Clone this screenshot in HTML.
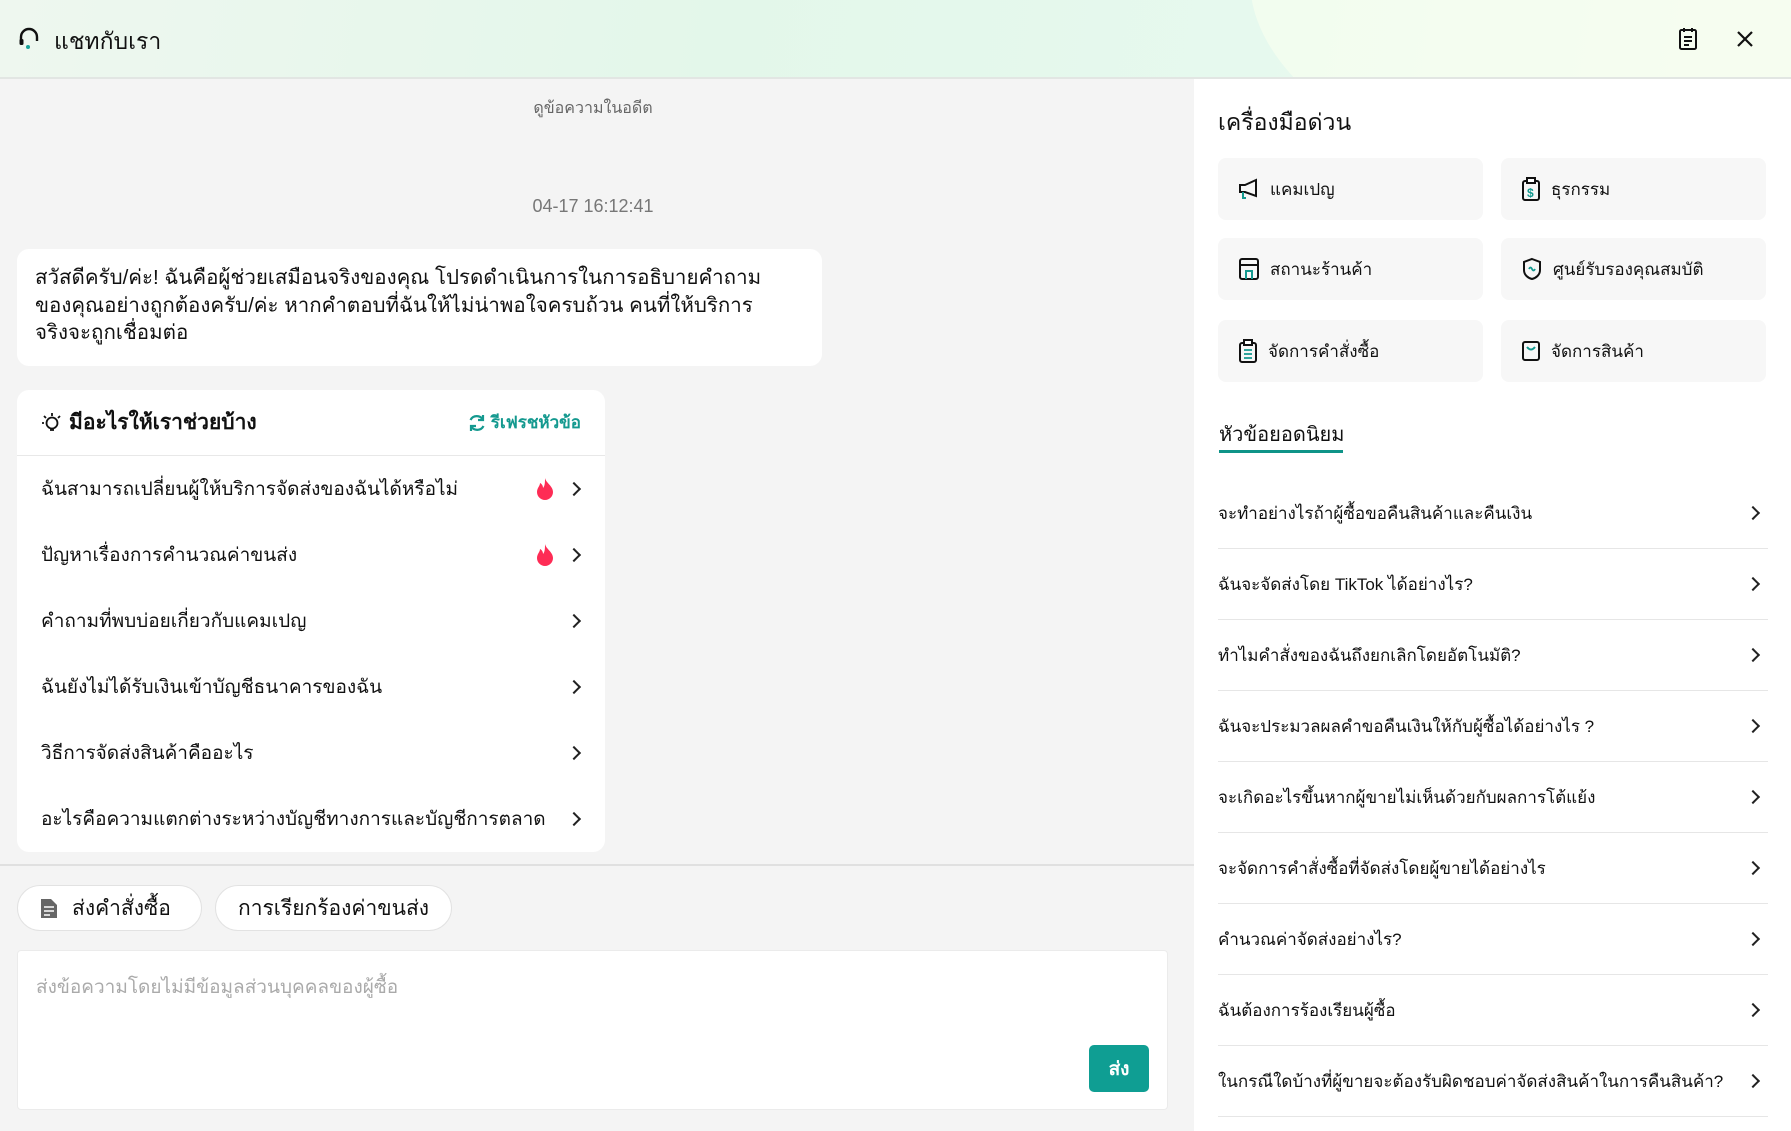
<!DOCTYPE html>
<html><head><meta charset="utf-8"><style>
*{box-sizing:border-box;margin:0;padding:0}
body{width:1791px;height:1131px;overflow:hidden;font-family:"Liberation Sans","DejaVu Sans",sans-serif;color:#111;background:#f4f4f4;position:relative}
.abs{position:absolute}
#hdr{left:0;top:0;width:1791px;height:79px;background:linear-gradient(100deg,#eef7ef 0%,#e3f7ea 40%,#e6f9ee 70%,#f1fbf0 100%);border-bottom:2px solid #e2e6e3;overflow:hidden}
#right{left:1194px;top:79px;width:597px;height:1052px;background:#fff}
.tool{position:absolute;background:#f7f7f7;border-radius:8px;height:62px;width:265px;display:flex;align-items:center;padding-left:20px;font-size:17px;gap:10px}
.row{position:absolute;left:1218px;width:550px;height:71px;border-bottom:1px solid #e6e6e6;display:flex;align-items:center;justify-content:space-between;font-size:17px}
.chev{width:10px;height:10px;border-right:2px solid #222;border-top:2px solid #222;transform:rotate(45deg);margin-right:10px}
.item{position:absolute;left:17px;width:588px;height:66px;display:flex;align-items:center;padding:0 24px 0 24px;font-size:19px;justify-content:space-between}
.fire{display:inline-block;vertical-align:middle;margin-right:14px}
</style></head><body>
<div id="hdr" class="abs">
 <div class="abs" style="left:1250px;top:-300px;width:1400px;height:560px;border-radius:50%;background:rgba(250,255,240,.6)"></div>
 <svg class="abs" style="left:18px;top:27px" width="22" height="24" viewBox="0 0 22 24"><path d="M3 14V10a8 8 0 0 1 16 0v4" fill="none" stroke="#111" stroke-width="2.4"/><rect x="1.5" y="12" width="4" height="6" rx="1.5" fill="#111"/><circle cx="10" cy="20" r="2" fill="#1aa39a"/></svg>
 <div class="abs" style="left:54px;top:24px;font-size:23px">แชทกับเรา</div>
 <svg class="abs" style="left:1677px;top:27px" width="22" height="24" viewBox="0 0 22 24"><rect x="3" y="3" width="16" height="19" rx="1.5" fill="none" stroke="#111" stroke-width="2"/><path d="M7 1v4M15 1v4M7 10h8M7 14h8M7 18h5" stroke="#111" stroke-width="2"/></svg>
 <svg class="abs" style="left:1736px;top:30px" width="18" height="18" viewBox="0 0 18 18"><path d="M2 2L16 16M16 2L2 16" stroke="#111" stroke-width="2.2"/></svg>
</div>

<div class="abs" style="left:0;top:96px;width:1186px;text-align:center;font-size:16px;color:#666">ดูข้อความในอดีต</div>
<div class="abs" style="left:0;top:196px;width:1186px;text-align:center;font-size:18px;color:#777">04-17 16:12:41</div>
<div class="abs" style="left:17px;top:249px;width:805px;height:117px;background:#fff;border-radius:12px;padding:15px 50px 14px 18px;font-size:20.5px;line-height:27.5px">สวัสดีครับ/ค่ะ! ฉันคือผู้ช่วยเสมือนจริงของคุณ โปรดดำเนินการในการอธิบายคำถามของคุณอย่างถูกต้องครับ/ค่ะ หากคำตอบที่ฉันให้ไม่น่าพอใจครบถ้วน คนที่ให้บริการจริงจะถูกเชื่อมต่อ</div>

<div class="abs" style="left:17px;top:390px;width:588px;height:462px;background:#fff;border-radius:12px"></div>
<div class="abs" style="left:17px;top:390px;width:588px;height:66px;border-bottom:1px solid #e8e8e8;display:flex;align-items:center;justify-content:space-between;padding:0 24px">
 <div style="font-size:21px;font-weight:bold;display:flex;align-items:center;gap:8px"><svg width="20" height="22" viewBox="0 0 20 22"><circle cx="11" cy="11" r="5.5" fill="none" stroke="#111" stroke-width="1.8"/><path d="M9 18h4M11 1v3M3 4l2 2M19 4l-2 2M1 11h2" stroke="#111" stroke-width="1.8"/></svg>มีอะไรให้เราช่วยบ้าง</div>
 <div style="font-size:17px;font-weight:bold;color:#14998f;display:flex;align-items:center;gap:4px"><svg width="20" height="20" viewBox="0 0 20 20"><path d="M16 7a7 7 0 0 0-12.5 0M4 13a7 7 0 0 0 12.5 0" fill="none" stroke="#14998f" stroke-width="2.2"/><path d="M16 2v5h-5M4 18v-5h5" fill="none" stroke="#14998f" stroke-width="2.2"/></svg>รีเฟรชหัวข้อ</div>
</div>
<div class="item" style="top:456px"><span>ฉันสามารถเปลี่ยนผู้ให้บริการจัดส่งของฉันได้หรือไม่</span><span><svg class="fire" width="20" height="24" viewBox="0 0 20 24"><path d="M10 1c1 5 8 8 8 14a8 8 0 0 1-16 0c0-4 3-6 3-9 2 1 3 3 3 5 2-2 2-6 2-10z" fill="#fe2c55"/></svg><span class="chev" style="display:inline-block;margin-right:2px"></span></span></div>
<div class="item" style="top:522px"><span>ปัญหาเรื่องการคำนวณค่าขนส่ง</span><span><svg class="fire" width="20" height="24" viewBox="0 0 20 24"><path d="M10 1c1 5 8 8 8 14a8 8 0 0 1-16 0c0-4 3-6 3-9 2 1 3 3 3 5 2-2 2-6 2-10z" fill="#fe2c55"/></svg><span class="chev" style="display:inline-block;margin-right:2px"></span></span></div>
<div class="item" style="top:588px"><span>คำถามที่พบบ่อยเกี่ยวกับแคมเปญ</span><span class="chev" style="margin-right:2px"></span></div>
<div class="item" style="top:654px"><span>ฉันยังไม่ได้รับเงินเข้าบัญชีธนาคารของฉัน</span><span class="chev" style="margin-right:2px"></span></div>
<div class="item" style="top:720px"><span>วิธีการจัดส่งสินค้าคืออะไร</span><span class="chev" style="margin-right:2px"></span></div>
<div class="item" style="top:786px"><span>อะไรคือความแตกต่างระหว่างบัญชีทางการและบัญชีการตลาด</span><span class="chev" style="margin-right:2px"></span></div>

<div class="abs" style="left:0;top:864px;width:1194px;height:2px;background:#e0e0e0"></div>
<div class="abs" style="left:17px;top:885px;width:185px;height:46px;border:1px solid #e2e2e2;border-radius:23px;background:#fff;display:flex;align-items:center;padding-left:22px;gap:14px;font-size:21px"><svg width="18" height="22" viewBox="0 0 18 22"><path d="M1 2h10l6 6v13H1z" fill="#666"/><path d="M4 10h10M4 14h10M4 18h6" stroke="#fff" stroke-width="1.6"/></svg>ส่งคำสั่งซื้อ</div>
<div class="abs" style="left:215px;top:885px;width:237px;height:46px;border:1px solid #e2e2e2;border-radius:23px;background:#fff;display:flex;align-items:center;justify-content:center;font-size:21px">การเรียกร้องค่าขนส่ง</div>
<div class="abs" style="left:17px;top:950px;width:1151px;height:160px;background:#fff;border:1px solid #ebebeb;border-radius:4px"></div>
<div class="abs" style="left:36px;top:972px;font-size:19px;color:#aaa">ส่งข้อความโดยไม่มีข้อมูลส่วนบุคคลของผู้ซื้อ</div>
<div class="abs" style="left:1089px;top:1045px;width:60px;height:47px;background:#0f9e93;border-radius:5px;color:#fff;font-size:19px;font-weight:bold;display:flex;align-items:center;justify-content:center">ส่ง</div>

<div id="right" class="abs"></div>
<div class="abs" style="left:1218px;top:105px;font-size:23px">เครื่องมือด่วน</div>
<div class="tool" style="left:1218px;top:158px"><svg width="22" height="22" viewBox="0 0 22 22"><path d="M2 7h5l11-5v16L7 14H2z" fill="none" stroke="#111" stroke-width="2"/><path d="M5 14v6h3" fill="none" stroke="#14998f" stroke-width="2"/></svg>แคมเปญ</div>
<div class="tool" style="left:1501px;top:158px"><svg width="20" height="24" viewBox="0 0 20 24"><rect x="2" y="4" width="16" height="19" rx="2" fill="none" stroke="#111" stroke-width="2"/><rect x="6" y="1" width="8" height="5" fill="#fff" stroke="#111" stroke-width="2"/><text x="6" y="20" font-size="12" font-weight="bold" fill="#14998f" font-family="Liberation Sans">$</text></svg>ธุรกรรม</div>
<div class="tool" style="left:1218px;top:238px"><svg width="22" height="24" viewBox="0 0 22 24"><rect x="2" y="2" width="18" height="20" rx="2" fill="none" stroke="#111" stroke-width="2"/><path d="M2 8h18" stroke="#111" stroke-width="2"/><path d="M8 22v-8h6v8" fill="none" stroke="#14998f" stroke-width="2"/></svg>สถานะร้านค้า</div>
<div class="tool" style="left:1501px;top:238px"><svg width="22" height="24" viewBox="0 0 22 24"><path d="M11 2l8 3v8c0 5-4 8-8 9-4-1-8-4-8-9V5z" fill="none" stroke="#111" stroke-width="2"/><path d="M8 12q1.5-3 3 0t3 0" fill="none" stroke="#14998f" stroke-width="1.8"/></svg>ศูนย์รับรองคุณสมบัติ</div>
<div class="tool" style="left:1218px;top:320px"><svg width="20" height="24" viewBox="0 0 20 24"><rect x="2" y="4" width="16" height="19" rx="2" fill="none" stroke="#111" stroke-width="2"/><rect x="6" y="1" width="8" height="5" fill="#fff" stroke="#111" stroke-width="2"/><path d="M6 11h8M6 15h8M6 19h8" stroke="#14998f" stroke-width="1.8"/></svg>จัดการคำสั่งซื้อ</div>
<div class="tool" style="left:1501px;top:320px"><svg width="20" height="22" viewBox="0 0 20 22"><rect x="2" y="2" width="16" height="18" rx="2" fill="none" stroke="#111" stroke-width="2"/><path d="M6 7q4 5 8 0" fill="none" stroke="#14998f" stroke-width="2"/></svg>จัดการสินค้า</div>
<div class="abs" style="left:1219px;top:418px;font-size:20px">หัวข้อยอดนิยม</div>
<div class="abs" style="left:1219px;top:450px;width:124px;height:3px;background:#0f9488"></div>
<div class="row" style="top:478px"><span>จะทำอย่างไรถ้าผู้ซื้อขอคืนสินค้าและคืนเงิน</span><span class="chev"></span></div>
<div class="row" style="top:549px"><span>ฉันจะจัดส่งโดย TikTok ได้อย่างไร?</span><span class="chev"></span></div>
<div class="row" style="top:620px"><span>ทำไมคำสั่งของฉันถึงยกเลิกโดยอัตโนมัติ?</span><span class="chev"></span></div>
<div class="row" style="top:691px"><span>ฉันจะประมวลผลคำขอคืนเงินให้กับผู้ซื้อได้อย่างไร ?</span><span class="chev"></span></div>
<div class="row" style="top:762px"><span>จะเกิดอะไรขึ้นหากผู้ขายไม่เห็นด้วยกับผลการโต้แย้ง</span><span class="chev"></span></div>
<div class="row" style="top:833px"><span>จะจัดการคำสั่งซื้อที่จัดส่งโดยผู้ขายได้อย่างไร</span><span class="chev"></span></div>
<div class="row" style="top:904px"><span>คำนวณค่าจัดส่งอย่างไร?</span><span class="chev"></span></div>
<div class="row" style="top:975px"><span>ฉันต้องการร้องเรียนผู้ซื้อ</span><span class="chev"></span></div>
<div class="row" style="top:1046px"><span>ในกรณีใดบ้างที่ผู้ขายจะต้องรับผิดชอบค่าจัดส่งสินค้าในการคืนสินค้า?</span><span class="chev"></span></div>
</body></html>
